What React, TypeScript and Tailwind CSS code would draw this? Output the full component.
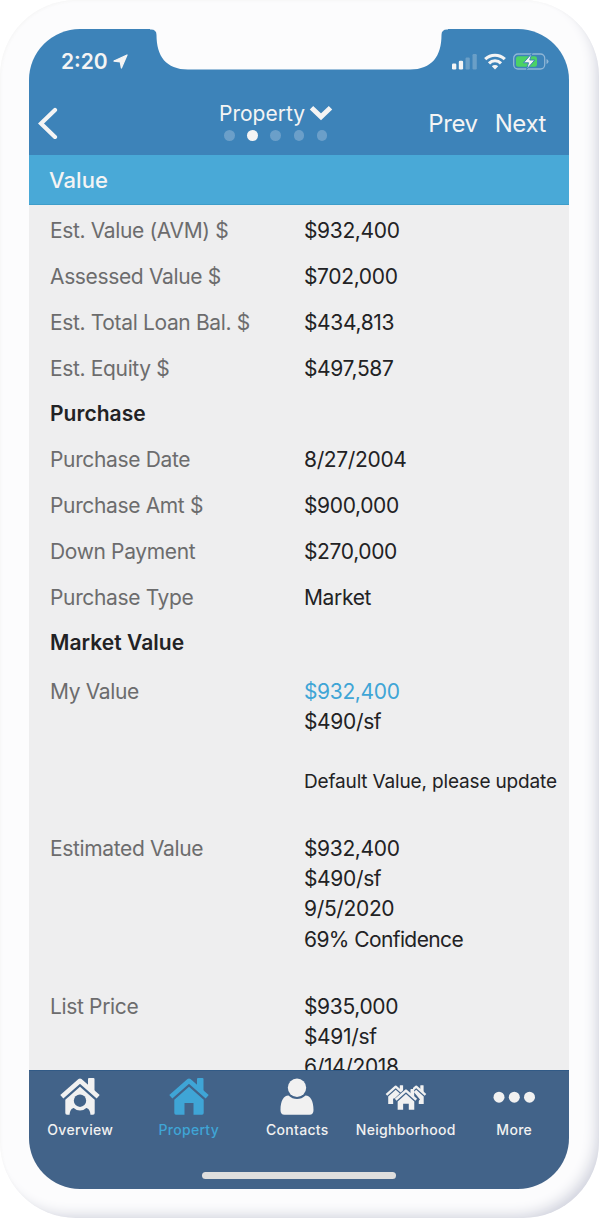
import React from 'react';

interface ValueRow {
    label: string;
    value?: string;
    heading?: boolean;
}

interface DetailBlock {
    label: string;
    lines: string[];
    link?: boolean;
}

const rows: ValueRow[] = [
    { label: 'Est. Value (AVM) $', value: '$932,400' },
    { label: 'Assessed Value $', value: '$702,000' },
    { label: 'Est. Total Loan Bal. $', value: '$434,813' },
    { label: 'Est. Equity $', value: '$497,587' },
    { label: 'Purchase', heading: true },
    { label: 'Purchase Date', value: '8/27/2004' },
    { label: 'Purchase Amt $', value: '$900,000' },
    { label: 'Down Payment', value: '$270,000' },
    { label: 'Purchase Type', value: 'Market' },
    { label: 'Market Value', heading: true },
];

const blocks: DetailBlock[] = [
    { label: 'My Value', lines: ['$932,400', '$490/sf', '', 'Default Value, please update'], link: true },
    { label: 'Estimated Value', lines: ['$932,400', '$490/sf', '9/5/2020', '69% Confidence'] },
    { label: 'List Price', lines: ['$935,000', '$491/sf', '6/14/2018'] },
];

// Roof line with chimney, shared by the house icons
const Roof = () => (
    <>
        <path d="M2.800 19.800 21 3.800 39.200 19.800" fill="none" stroke="currentColor" strokeWidth="4.600" strokeLinejoin="round" />
        <path d="M29 2q0-1 1-1h4.500q1 0 1 1v15L29 11z" />
    </>
);

const OverviewIcon = () => (
    <svg width="42" height="40" viewBox="0 0 42 40" fill="currentColor">
        <Roof />
        <path d="M21 9.800 35.700 22.800V36q0 1.700-1.700 1.700H8Q6.300 37.700 6.300 36V22.800z" />
        <path d="M10.500 38.500c.2-5 2-7.500 5-7.500h11c3 0 4.800 2.500 5 7.500z" fill="#426389" />
        <circle cx="21" cy="24" r="9.400" />
        <circle cx="21" cy="23.700" r="6.200" fill="#426389" />
    </svg>
);

const PropertyIcon = () => (
    <svg width="42" height="40" viewBox="0 0 42 40" fill="currentColor">
        <Roof />
        <path d="M21 9.800 35.700 22.800V36q0 1.700-1.700 1.700h-8.500V26h-9v11.700H8Q6.300 37.700 6.300 36V22.800z" />
    </svg>
);

const ContactsIcon = () => (
    <svg width="42" height="40" viewBox="0 0 42 40" fill="currentColor">
        <circle cx="21" cy="10.800" r="9.200" />
        <path d="M12.500 18.500c5 4.700 12 4.700 17 0 5 .2 8 5.500 8 14.500 0 3-1.200 4.700-4 4.700h-25c-2.800 0-4-1.700-4-4.700 0-9 3-14.300 8-14.500z" />
    </svg>
);

const SmallHouse = () => (
    <>
        <Roof />
        <path d="M21 9.800 35.700 22.800V37.700H26V27h-10v10.700H6.300V22.800z" />
    </>
);

const NeighborhoodIcon = () => (
    <svg width="42" height="40" viewBox="0 0 42 40" fill="currentColor">
        <g transform="translate(0 7.800) scale(.51)"><SmallHouse /></g>
        <g transform="translate(20.500 7.800) scale(.51)"><SmallHouse /></g>
        <path d="m8 23 13-12.500 7-1V14l7 8.500-4 4v6.500H12v-7z" fill="#426389" />
        <g transform="translate(9.100 11.500) scale(.565)"><SmallHouse /></g>
    </svg>
);

const MoreIcon = () => (
    <svg width="42" height="40" viewBox="0 0 42 40" fill="currentColor">
        <circle cx="6" cy="20.200" r="5.500" />
        <circle cx="21.300" cy="20.200" r="5.500" />
        <circle cx="36.500" cy="20.200" r="5.500" />
    </svg>
);

const tabs = [
    { label: 'Overview', icon: <OverviewIcon /> },
    { label: 'Property', icon: <PropertyIcon />, active: true },
    { label: 'Contacts', icon: <ContactsIcon /> },
    { label: 'Neighborhood', icon: <NeighborhoodIcon /> },
    { label: 'More', icon: <MoreIcon /> },
];

const StatusBar = () => (
    <div className="flex h-[64px] items-center justify-between pl-8 pr-5">
        <div className="flex items-center gap-[5px]">
            <span className="text-[21px] font-semibold leading-none">2:20</span>
            <svg width="15" height="15" viewBox="0 0 15 15" fill="currentColor">
                <path d="M14 1 8.400 14 7.300 7.900 1 7z" stroke="currentColor" strokeWidth="1.300" strokeLinejoin="round" />
            </svg>
        </div>
        <div className="flex items-center gap-[7px]">
            <svg width="26" height="17" viewBox="0 0 26 17" fill="currentColor">
                <rect x="1" y="10.500" width="4.300" height="6" rx="1.200" />
                <rect x="7.800" y="7.800" width="4.300" height="8.700" rx="1.200" />
                <rect x="14.500" y="4.500" width="4.300" height="12" rx="1.200" opacity=".25" />
                <rect x="21.500" y="1" width="4.300" height="15.500" rx="1.200" opacity=".25" />
            </svg>
            <svg width="22" height="17" viewBox="0 0 22 17" fill="none" stroke="currentColor" strokeWidth="3.100">
                <path d="M1.200 6.200a14 14 0 0 1 19.600 0M5 10.300a8.500 8.500 0 0 1 12 0" />
                <path d="m11 16.500-3.200-3.300a4.600 4.600 0 0 1 6.400 0z" fill="currentColor" stroke="none" />
            </svg>
            <svg width="36" height="17" viewBox="0 0 36 17">
                <rect x=".7" y="1" width="31" height="15" rx="4.200" fill="none" stroke="#8fb6d6" strokeWidth="1.300" />
                <rect x="3" y="3.200" width="21" height="10.600" rx="2.200" fill="#4bd265" />
                <path d="M33.500 6v5q2-.8 2-2.500T33.500 6z" fill="#8fb6d6" />
                <path d="m18.800.500-8.300 9.300h5l-2 6.700 8.300-9.500h-5z" fill="#f5f5f5" stroke="#3d83b9" strokeWidth="1" />
            </svg>
        </div>
    </div>
);

const NavBar = () => (
    <div className="grid h-[62px] grid-cols-[190px_1fr_190px] items-start">
        <svg className="ml-[9px] mt-[14px]" width="22" height="32" viewBox="0 0 22 32" fill="none" stroke="currentColor" strokeWidth="4.200" strokeLinecap="round">
            <path d="M17 3 3 16.500 17 30" />
        </svg>
        <div className="pt-2">
            <div className="flex items-center gap-1">
                <span className="text-[21px] leading-[26px]">Property</span>
                <svg className="-mt-[3px]" width="24" height="16" viewBox="0 0 24 16" fill="none" stroke="currentColor" strokeWidth="5">
                    <path d="m2.500 2.800 9.500 9 9.500-9" />
                </svg>
            </div>
            <div className="mt-[3px] flex gap-[12.700px] pl-[5px]">
                {[0, 1, 2, 3, 4].map((i) => (
                    <span key={i} className={`size-[10.500px] rounded-full ${i === 1 ? 'bg-[#f4f4f4]' : 'bg-[#6b9fc9]'}`} />
                ))}
            </div>
        </div>
        <div className="flex justify-end gap-[17px] pr-[23px] pt-[15px] text-[24px] leading-[32px] tracking-[-0.4px]">
            <button>Prev</button>
            <button>Next</button>
        </div>
    </div>
);

export default function App() {
    return (
        <div className="h-[1219px] w-[600px] overflow-hidden bg-white font-['Inter',sans-serif] text-[#f4f4f4]">
            <div className="relative h-[1218px] w-[599px] rounded-[76px] bg-[#fcfcfd] px-[29px] pt-[29px] shadow-[inset_-9px_-9px_14px_-7px_#cfd1dc,inset_1px_1px_3px_#f6f6f6]">
                <div className="flex h-[1160px] w-[540px] flex-col overflow-hidden rounded-[51px] bg-[#eeeeef]">
                    <header className="h-[126px] shrink-0 bg-[#3d83b9]">
                        <StatusBar />
                        <NavBar />
                    </header>
                    <div className="flex h-[50px] shrink-0 items-center border-b border-[#3d9dca] bg-[#49a9d7] pl-5 pt-[2px] text-[22px] font-medium tracking-[0.1px]">
                        Value
                    </div>

                    <main className="min-h-0 flex-1 overflow-hidden pt-[3px] text-[21px] tracking-[-0.35px] text-[#222224]">
                        {rows.map((row) => (
                            <div key={row.label} className="grid h-[45.800px] grid-cols-[254px_1fr] items-center pl-[21px]">
                                <span className={row.heading ? 'font-semibold tracking-[0.05px]' : 'text-[#6c6c6d]'}>{row.label}</span>
                                <span>{row.value}</span>
                            </div>
                        ))}
                        <div className="pt-[11px]">
                            {blocks.map((block) => (
                                <div key={block.label} className="grid h-[157.300px] grid-cols-[254px_1fr] pl-[21px] leading-[30px]">
                                    <span className="text-[#6c6c6d]">{block.label}</span>
                                    <div>
                                        {block.lines.map((line, i) => (
                                            <div
                                                key={i}
                                                className={`h-[30.100px] whitespace-nowrap ${block.link && i === 0 ? 'text-[#3fa5d6]' : ''} ${line.startsWith('Default') ? 'text-[19px] tracking-[-0.16px]' : ''} ${line.endsWith('Confidence') ? 'tracking-[-0.6px]' : ''}`}
                                            >
                                                {line}
                                            </div>
                                        ))}
                                    </div>
                                </div>
                            ))}
                        </div>
                    </main>

                    <footer className="flex h-[119px] shrink-0 flex-col items-center border-t border-[#315a86] bg-[#426389]">
                        <nav className="grid w-full grid-cols-[repeat(5,108.500px)] pt-[6px]">
                            {tabs.map((tab) => (
                                <button key={tab.label} className={`-ml-[6px] flex flex-col items-center ${tab.active ? 'text-[#3fa5d6]' : 'text-[#f1f1f1]'}`}>
                                    {tab.icon}
                                    <span className="mt-[3px] text-[14px] font-medium leading-[20px] tracking-[0.3px]">{tab.label}</span>
                                </button>
                            ))}
                        </nav>
                        <div className="mt-[32px] h-[7px] w-[194px] rounded-full bg-[#dedede]" />
                    </footer>
                </div>

                {/* notch */}
                <svg className="absolute left-[150px] top-[28px]" width="298" height="42" viewBox="0 0 298 42" fill="#fcfcfd">
                    <path d="M0 0H298V1.500H297Q291.500 1.500 291.500 7C291.500 28 282 41.500 260 41.500H38C16 41.500 6.500 28 6.500 7Q6.500 1.500 1 1.500H0Z" />
                </svg>
            </div>
        </div>
    );
}
